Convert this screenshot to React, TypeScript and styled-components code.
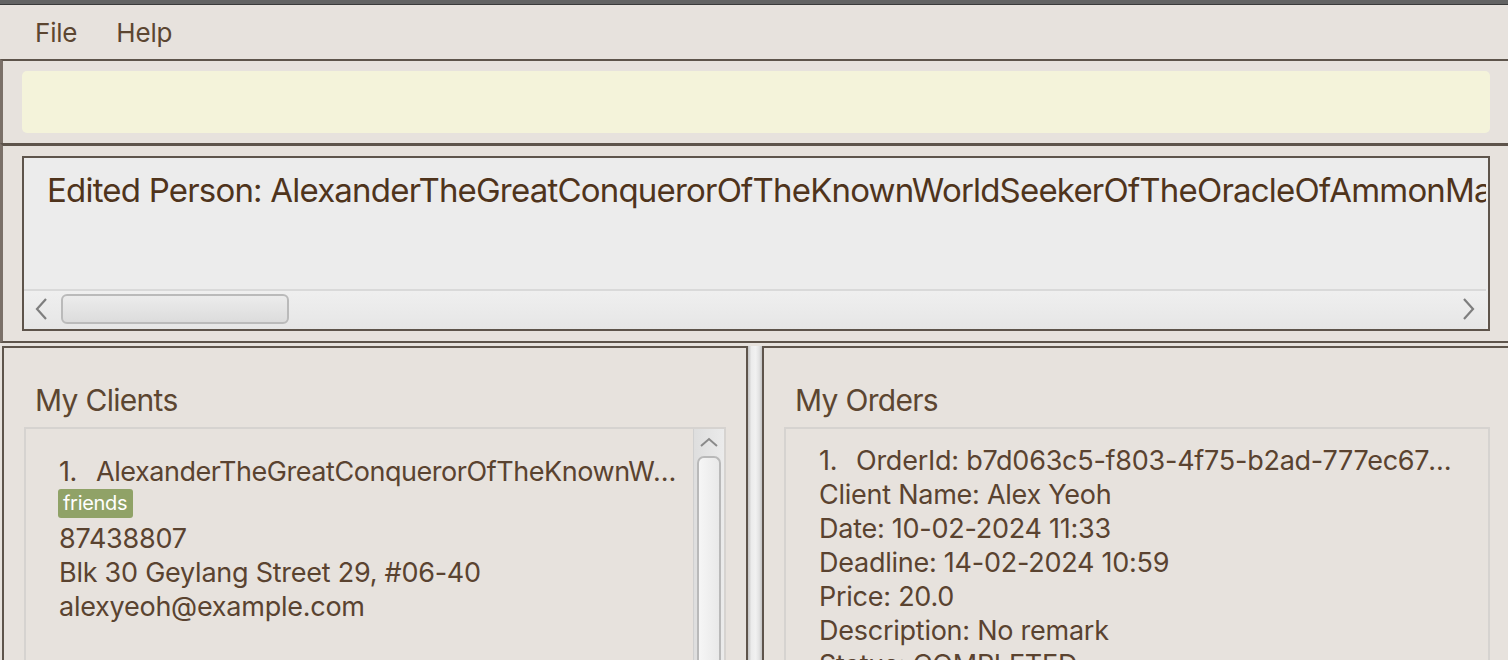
import React from "react";
import styled, { createGlobalStyle } from "styled-components";

const Global = createGlobalStyle`
  html, body { margin: 0; padding: 0; background: #e7e2dd; }
  body { font-family: Inter, "Noto Sans", sans-serif; overflow: hidden; }
  * { box-sizing: border-box; }
`;

const Shell = styled.div`
  width: 1508px;
  height: 660px;
  display: flex;
  flex-direction: column;
  background: #e7e2dd;
  overflow: hidden;
`;

const TopStrip = styled.div`
  height: 5px;
  background: #636363;
  border-bottom: 1px solid #3a3a3a;
  flex: none;
`;

const MenuBar = styled.div`
  height: 54px;
  flex: none;
  display: flex;
  gap: 39px;
  padding: 12px 0 0 35px;
`;

const MenuItem = styled.span`
  font-size: 26px;
  line-height: 32px;
  color: #5c4631;
  letter-spacing: -0.2px;
`;

const Pane = styled.div<{ $top: number; $bottom?: number }>`
  flex: none;
  border-top: ${(p) => p.$top}px solid #5e544b;
  border-bottom: ${(p) => p.$bottom ?? 0}px solid #5e544b;
  border-left: 3px solid #7b7068;
  padding: 10px 18px 10px 19px;
`;

const CommandBox = styled.div`
  height: 62px;
  background: #f4f3da;
  border-radius: 5px;
`;

const ResultBox = styled.div`
  height: 175px;
  border: 2px solid #5e544b;
  background: #ececec;
  display: flex;
  flex-direction: column;
  overflow: hidden;
`;

const ResultText = styled.div`
  flex: 1;
  padding: 12px 0 0 23px;
  font-size: 33px;
  line-height: 40px;
  letter-spacing: -0.8px;
  color: #4f341c;
  white-space: nowrap;
  overflow: hidden;
  margin-right: 2px;
`;

const HScroll = styled.div`
  height: 40px;
  flex: none;
  border-top: 2px solid #d9d9d9;
  background: linear-gradient(#efefef, #e6e6e6);
  display: flex;
  align-items: center;
  padding: 2px 10px 4px 10px;
  gap: 12px;
  margin-right: 2px;
`;

const ArrowBtn = styled.div`
  width: 15px;
  height: 24px;
  display: flex;
  align-items: center;
  justify-content: center;
  flex: none;
`;

const HThumb = styled.div`
  width: 228px;
  height: 30px;
  border: 2px solid #bababa;
  border-radius: 6px;
  background: linear-gradient(#ececec, #dcdcdc);
`;

const Spacer = styled.div`
  flex: 1;
`;

const Gap = styled.div`
  height: 3px;
  flex: none;
`;

const Panels = styled.div`
  flex: 1;
  display: flex;
  padding-left: 2px;
  min-height: 0;
`;

const Panel = styled.div<{ $right?: boolean }>`
  width: ${(p) => (p.$right ? "748px" : "746px")};
  flex: none;
  border: 2px solid #5e544b;
  border-bottom: none;
  ${(p) => (p.$right ? "border-right: none;" : "")}
  padding: 33px 20px 0 20px;
  display: flex;
  flex-direction: column;
`;

const Splitter = styled.div`
  width: 14px;
  flex: none;
  background: linear-gradient(to right, #c4c4c4, #ececec 25%, #f1f1f1 55%, #e2e2e2 80%, #c4c4c4);
`;

const Title = styled.div`
  font-size: 30px;
  line-height: 38px;
  letter-spacing: -0.7px;
  color: #5c4631;
  padding-left: 11px;
  margin-bottom: 8px;
`;

const ListBox = styled.div`
  flex: 1;
  border: 2px solid #d6d3d0;
  border-bottom: none;
  display: flex;
  min-height: 0;
`;

const Cell = styled.div<{ $top: number; $right: number }>`
  flex: 1;
  min-width: 0;
  padding: ${(p) => p.$top}px ${(p) => p.$right}px 0 33px;
  color: #5a4330;
  font-size: 27px;
  line-height: 34px;
  letter-spacing: -0.25px;
`;

const Line = styled.div<{ $tight?: boolean }>`
  white-space: nowrap;
  overflow: hidden;
  text-overflow: ellipsis;
  ${(p) => (p.$tight ? "letter-spacing: -0.45px;" : "")}
`;

const Index = styled.span`
  display: inline-block;
  width: 37px;
`;

const Tag = styled.div`
  width: fit-content;
  margin: 0 0 4px -1px;
  background: #90a267;
  color: #ffffff;
  font-size: 20px;
  line-height: 29px;
  letter-spacing: -0.3px;
  padding: 0 6px 0 5px;
  border-radius: 3px;
`;

const VScroll = styled.div`
  width: 31px;
  flex: none;
  background: linear-gradient(to right, #dedede, #ebebeb);
  border-left: 1px solid #d0d0d0;
  display: flex;
  flex-direction: column;
  align-items: center;
  padding-top: 8px;
`;

const VThumb = styled.div`
  width: 24px;
  flex: 1;
  margin-top: 9px;
  border: 2px solid #b9b9b9;
  border-bottom: none;
  border-radius: 7px 7px 0 0;
  background: linear-gradient(to right, #f6f6f6, #e9e9e9);
`;

const Chevron = ({ dir }: { dir: "left" | "right" | "up" }) => {
  if (dir === "up") {
    return (
      <svg width="18" height="10" viewBox="0 0 18 10">
        <polyline points="1,9 9,2 17,9" fill="none" stroke="#8a8a8a" strokeWidth="2" />
      </svg>
    );
  }
  const pts = dir === "left" ? "12,1 3,11 12,21" : "3,1 12,11 3,21";
  return (
    <svg width="15" height="22" viewBox="0 0 15 22">
      <polyline points={pts} fill="none" stroke="#7e7e7e" strokeWidth="2.2" />
    </svg>
  );
};

export default function App() {
  return (
    <>
      <Global />
      <Shell>
        <TopStrip />
        <MenuBar>
          <MenuItem>File</MenuItem>
          <MenuItem>Help</MenuItem>
        </MenuBar>
        <Pane $top={2}>
          <CommandBox />
        </Pane>
        <Pane $top={3} $bottom={2}>
          <ResultBox>
            <ResultText>
              Edited Person: AlexanderTheGreatConquerorOfTheKnownWorldSeekerOfTheOracleOfAmmonMasterOfTheHellenisticWorld
            </ResultText>
            <HScroll>
              <ArrowBtn>
                <Chevron dir="left" />
              </ArrowBtn>
              <HThumb />
              <Spacer />
              <ArrowBtn>
                <Chevron dir="right" />
              </ArrowBtn>
            </HScroll>
          </ResultBox>
        </Pane>
        <Gap />
        <Panels>
          <Panel>
            <Title>My Clients</Title>
            <ListBox>
              <Cell $top={26} $right={8}>
                <Line $tight>
                  <Index>1.</Index>AlexanderTheGreatConquerorOfTheKnownWorldSeeker
                </Line>
                <Tag>friends</Tag>
                <Line>87438807</Line>
                <Line>Blk 30 Geylang Street 29, #06-40</Line>
                <Line>alexyeoh@example.com</Line>
              </Cell>
              <VScroll>
                <Chevron dir="up" />
                <VThumb />
              </VScroll>
            </ListBox>
          </Panel>
          <Splitter />
          <Panel $right>
            <Title>My Orders</Title>
            <ListBox>
              <Cell $top={15} $right={26}>
                <Line>
                  <Index>1.</Index>OrderId: b7d063c5-f803-4f75-b2ad-777ec67a1b2c
                </Line>
                <Line>Client Name: Alex Yeoh</Line>
                <Line>Date: 10-02-2024 11:33</Line>
                <Line>Deadline: 14-02-2024 10:59</Line>
                <Line>Price: 20.0</Line>
                <Line>Description: No remark</Line>
                <Line>Status: COMPLETED</Line>
              </Cell>
            </ListBox>
          </Panel>
        </Panels>
      </Shell>
    </>
  );
}
